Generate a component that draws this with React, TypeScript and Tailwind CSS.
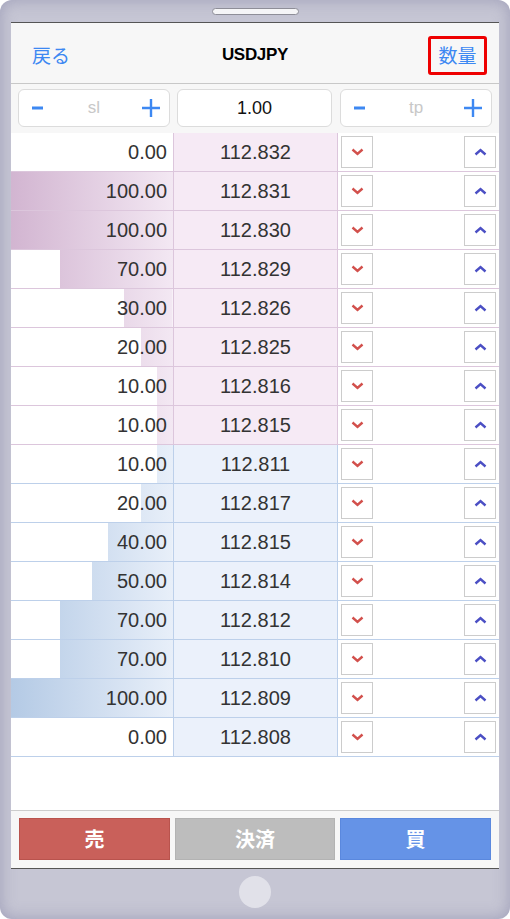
import React from "react";

type Level = { qty: number; price: string };

const asks: Level[] = [
  { qty: 0, price: "112.832" },
  { qty: 100, price: "112.831" },
  { qty: 100, price: "112.830" },
  { qty: 70, price: "112.829" },
  { qty: 30, price: "112.826" },
  { qty: 20, price: "112.825" },
  { qty: 10, price: "112.816" },
  { qty: 10, price: "112.815" },
];

const bids: Level[] = [
  { qty: 10, price: "112.811" },
  { qty: 20, price: "112.817" },
  { qty: 40, price: "112.815" },
  { qty: 50, price: "112.814" },
  { qty: 70, price: "112.812" },
  { qty: 70, price: "112.810" },
  { qty: 100, price: "112.809" },
  { qty: 0, price: "112.808" },
];

const num = { fontFamily: '"Liberation Sans", Arial, sans-serif' };
const jp = { fontFamily: '"Noto Sans CJK JP", "Noto Sans", sans-serif' };

const Minus = () => (
  <svg width="11" height="4" viewBox="0 0 11 4">
    <rect x="0" y="0.5" width="11" height="3" fill="#3d88f2" />
  </svg>
);

const Plus = () => (
  <svg width="20" height="20" viewBox="0 0 20 20">
    <path d="M10 1v18M1 10h18" stroke="#3d88f2" strokeWidth="2.4" />
  </svg>
);

const Chevron = ({ up }: { up?: boolean }) => (
  <svg width="13" height="8" viewBox="0 0 13 8">
    <path
      d={up ? "M1.5 6.5L6.5 2l5 4.5" : "M1.5 1.5L6.5 6l5-4.5"}
      fill="none"
      stroke={up ? "#4b4fc4" : "#d2504c"}
      strokeWidth="2.4"
    />
  </svg>
);

const StepBox = ({ label }: { label: string }) => (
  <div className="w-[152px] h-[38px] bg-white border border-[#dcdcdc] rounded-[6px] flex items-center justify-between pl-[13px] pr-[8px]">
    <Minus />
    <span className="text-[17px] text-[#c8c8c8] pl-[4px]" style={num}>
      {label}
    </span>
    <Plus />
  </div>
);

const Row = ({ level, side }: { level: Level; side: "ask" | "bid" }) => {
  const ask = side === "ask";
  return (
    <div
      className={`flex h-[39px] border-b ${
        ask ? "border-[#dcc6dc]" : "border-[#bdd0ea]"
      }`}
    >
      <div className="w-[162px] relative flex items-center justify-end pr-[6px]">
        {level.qty > 0 && (
          <div
            className={`absolute right-0 top-0 bottom-0 bg-linear-to-r bg-[length:162px_100%] bg-right ${
              ask ? "from-[#d2b5d1] to-[#f3e8f3]" : "from-[#b4cae5] to-[#e8eff9]"
            }`}
            style={{ width: `${(level.qty / 100) * 162}px` }}
          />
        )}
        <span className="relative text-[20px] text-[#333]" style={num}>
          {level.qty.toFixed(2)}
        </span>
      </div>
      <div
        className={`w-[165px] border-x flex items-center justify-center ${
          ask
            ? "bg-[#f6eaf5] border-[#dcc6dc]"
            : "bg-[#ebf1fb] border-[#bdd0ea]"
        }`}
      >
        <span className="text-[20px] text-[#333]" style={num}>
          {level.price}
        </span>
      </div>
      <div className="flex-1 bg-white flex items-center justify-between px-[3px]">
        <div className="w-[32px] h-[32px] border border-[#cccccc] flex items-center justify-center">
          <Chevron />
        </div>
        <div className="w-[32px] h-[32px] border border-[#cccccc] flex items-center justify-center">
          <Chevron up />
        </div>
      </div>
    </div>
  );
};

export default function App() {
  return (
    <div className="w-[510px] h-[919px] bg-white">
      <div className="w-full h-full rounded-[12px] bg-[#c6c6d4] shadow-[inset_0_0_16px_rgba(110,110,150,0.45)] flex flex-col px-[11px]">
        {/* speaker */}
        <div className="h-[22px] flex justify-center pt-[8px]">
          <div className="w-[87px] h-[7px] rounded-full bg-[#f5f5f7] border border-[#8e8e98]" />
        </div>

        {/* screen */}
        <div className="h-[847px] bg-white border-y border-[#555] flex flex-col">
          <div className="h-[61px] bg-[#f7f7f7] border-b border-[#c8c8c8] grid grid-cols-[1fr_auto_1fr] items-center pt-[4px]">
            <span className="pl-[21px] text-[19px] text-[#3d88f2]" style={jp}>
              戻る
            </span>
            <span
              className="text-[17px] font-bold text-black tracking-[-0.3px]"
              style={num}
            >
              USDJPY
            </span>
            <div className="flex justify-end pr-[12px]">
              <div className="w-[59px] h-[39px] border-[3px] border-[#ee0000] rounded-[3px] flex items-center justify-center">
                <span className="text-[19px] text-[#3d88f2]" style={jp}>
                  数量
                </span>
              </div>
            </div>
          </div>

          <div className="h-[49px] bg-[#f7f7f7] flex gap-[7px] pl-[7px] pt-[5px]">
            <StepBox label="sl" />
            <div className="w-[155px] h-[38px] bg-white border border-[#dcdcdc] rounded-[6px] flex items-center justify-center mr-[1px]">
              <span className="text-[18px] text-[#111]" style={num}>
                1.00
              </span>
            </div>
            <StepBox label="tp" />
          </div>

          <div className="flex flex-col">
            {asks.map((l) => (
              <Row key={"a" + l.price} level={l} side="ask" />
            ))}
            {bids.map((l) => (
              <Row key={"b" + l.price} level={l} side="bid" />
            ))}
          </div>

          <div className="flex-1" />

          <div className="h-[58px] bg-[#f7f7f7] border-t border-[#cccccc] flex gap-[5px] px-[8px] pt-[7px]">
            <button
              className="w-[151px] h-[42px] bg-[#c9605a] border border-[#b9534d] text-white text-[20px] font-bold"
              style={jp}
            >
              売
            </button>
            <button
              className="w-[160px] h-[42px] bg-[#bdbdbd] border border-[#b3b3b3] text-white text-[20px] font-bold"
              style={jp}
            >
              決済
            </button>
            <button
              className="w-[151px] h-[42px] bg-[#6593e7] border border-[#5a88de] text-white text-[20px] font-bold"
              style={jp}
            >
              買
            </button>
          </div>
        </div>

        {/* home button */}
        <div className="flex-1 flex justify-center pt-[7px]">
          <div className="w-[32px] h-[32px] rounded-full bg-[#e1e1e9]" />
        </div>
      </div>
    </div>
  );
}
